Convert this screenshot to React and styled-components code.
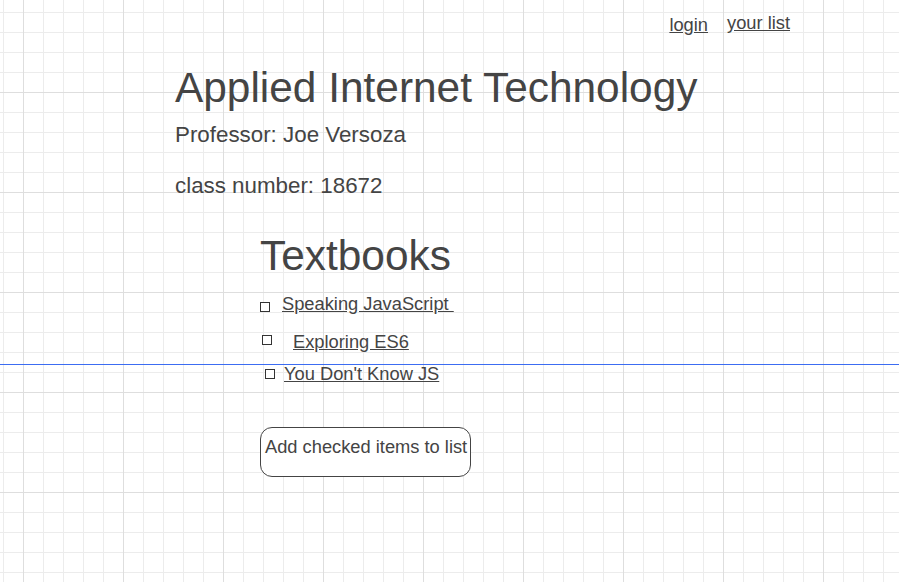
import * as React from "react";
import styled, { createGlobalStyle } from "styled-components";

const GlobalStyle = createGlobalStyle`
  html {
    background-color: #fff;
    background-image:
      linear-gradient(to right, #dedede 1px, transparent 1px),
      linear-gradient(to bottom, #dedede 1px, transparent 1px),
      linear-gradient(to right, #ececec 1px, transparent 1px),
      linear-gradient(to bottom, #ececec 1px, transparent 1px);
    background-size: 100px 100px, 100px 100px, 20px 20px, 20px 20px;
    background-position: 23px 92px, 23px 92px, 3px 12px, 3px 12px;
    min-height: 100%;
  }
  body {
    margin: 0;
    font-family: "Liberation Sans", Arial, sans-serif;
    color: #444;
  }
`;

const Page = styled.div`
  position: relative;
  min-height: 582px;
`;

const Nav = styled.nav`
  display: flex;
  justify-content: flex-end;
  align-items: flex-start;
  gap: 19px;
  padding: 12px 109px 0 0;
`;

const NavLink = styled.a`
  font-size: 18.3px;
  line-height: 21px;
  color: #444;
  text-decoration: underline;
  cursor: pointer;
  margin-top: ${(p) => (p.$drop ? "2px" : "0")};
`;

const Main = styled.main`
  display: flex;
  flex-direction: column;
  padding: 29px 0 0 175px;
`;

const Title = styled.h1`
  margin: 0;
  font-size: 42.4px;
  line-height: 48px;
  font-weight: 400;
`;

const SubLine = styled.p`
  margin: ${(p) => p.$top}px 0 0;
  font-size: 22.35px;
  line-height: 25px;
`;

const Textbooks = styled.section`
  display: flex;
  flex-direction: column;
  align-items: flex-start;
  margin: 34px 0 0 85px;
`;

const SectionTitle = styled.h2`
  margin: 0;
  font-size: 42.4px;
  line-height: 48px;
  font-weight: 400;
`;

const BookList = styled.ul`
  list-style: none;
  margin: 13px 0 0;
  padding: 0;
  display: flex;
  flex-direction: column;
`;

const BookRow = styled.li`
  display: flex;
  align-items: center;
  margin-top: ${(p) => p.$top}px;
  padding-left: ${(p) => p.$indent}px;
  gap: ${(p) => p.$gap}px;
`;

const Box = styled.input.attrs({ type: "checkbox" })`
  appearance: none;
  margin: 0;
  width: 10px;
  height: 10px;
  border: 1.5px solid #333;
  background: #fff;
  flex-shrink: 0;
  transform: translateY(${(p) => p.$shift}px);
`;

const BookLink = styled.a`
  font-size: 18.3px;
  line-height: 21px;
  color: #444;
  text-decoration: underline;
  white-space: pre;
  cursor: pointer;
`;

const AddButton = styled.button`
  margin-top: 43px;
  height: 50px;
  padding: 0 3px 10px 4px;
  border: 1px solid #444;
  border-radius: 12px;
  background: #fff;
  font-family: "Liberation Sans", Arial, sans-serif;
  font-size: 18.3px;
  color: #444;
  cursor: pointer;
`;

const BlueRule = styled.div`
  position: absolute;
  left: 0;
  right: 0;
  top: 364px;
  height: 1px;
  background: #3c6cf2;
`;

const books = [
  { title: "Speaking JavaScript ", indent: 0, gap: 12, top: 0, shift: 3 },
  { title: "Exploring ES6", indent: 2, gap: 21, top: 17, shift: -2 },
  { title: "You Don't Know JS", indent: 5, gap: 9, top: 11, shift: 0 },
];

export default function App() {
  return (
    <Page>
      <GlobalStyle />
      <Nav>
        <NavLink $drop>login</NavLink>
        <NavLink>your list</NavLink>
      </Nav>
      <Main>
        <Title>Applied Internet Technology</Title>
        <SubLine $top={10}>Professor: Joe Versoza</SubLine>
        <SubLine $top={26}>class number: 18672</SubLine>
        <Textbooks>
          <SectionTitle>Textbooks</SectionTitle>
          <BookList>
            {books.map((b) => (
              <BookRow key={b.title} $indent={b.indent} $gap={b.gap} $top={b.top}>
                <Box $shift={b.shift} />
                <BookLink>{b.title}</BookLink>
              </BookRow>
            ))}
          </BookList>
          <AddButton>Add checked items to list</AddButton>
        </Textbooks>
      </Main>
      <BlueRule />
    </Page>
  );
}
